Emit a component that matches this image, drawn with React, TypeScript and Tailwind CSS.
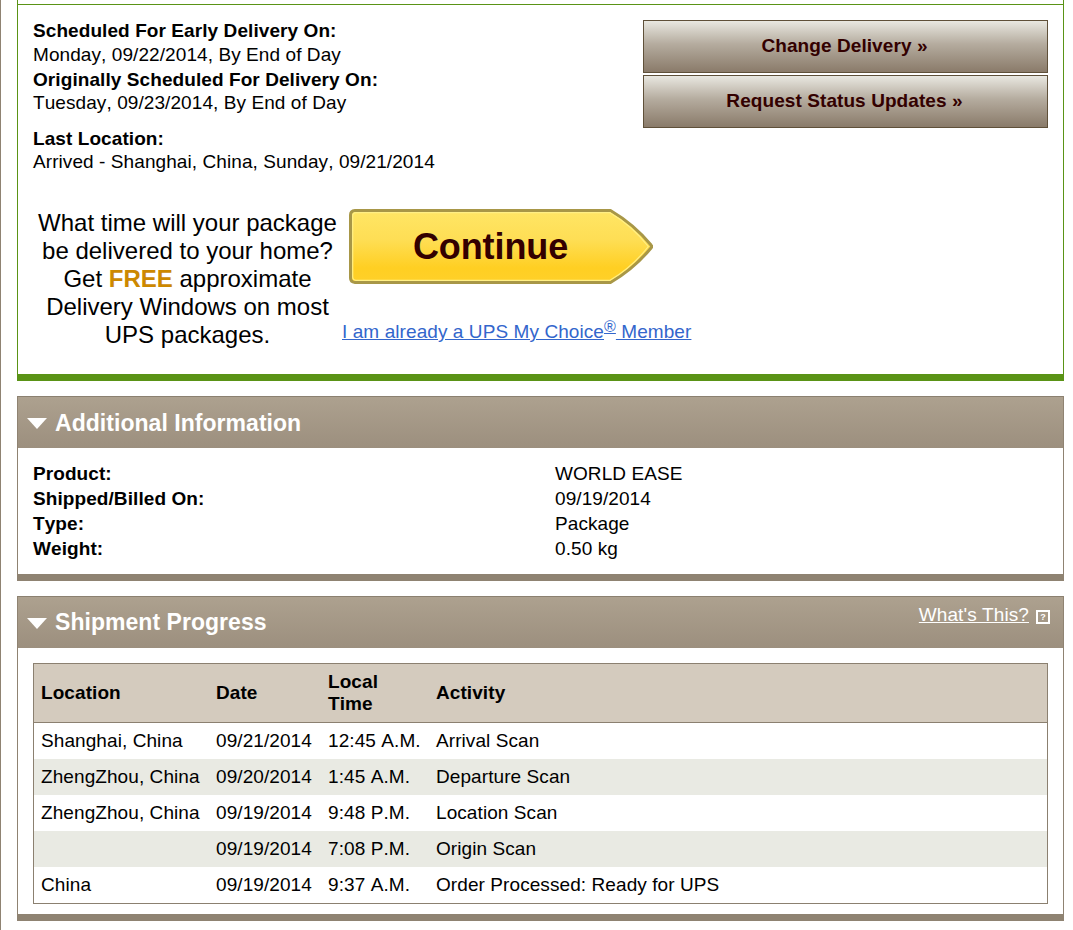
import type { ReactNode } from 'react';

const details = [
    { label: "Product:", value: "WORLD EASE" },
    { label: "Shipped/Billed On:", value: "09/19/2014" },
    { label: "Type:", value: "Package" },
    { label: "Weight:", value: "0.50 kg" },
]

const scans = [
    { location: "Shanghai, China", date: "09/21/2014", time: "12:45 A.M.", activity: "Arrival Scan" },
    { location: "ZhengZhou, China", date: "09/20/2014", time: "1:45 A.M.", activity: "Departure Scan" },
    { location: "ZhengZhou, China", date: "09/19/2014", time: "9:48 P.M.", activity: "Location Scan" },
    { location: "", date: "09/19/2014", time: "7:08 P.M.", activity: "Origin Scan" },
    { location: "China", date: "09/19/2014", time: "9:37 A.M.", activity: "Order Processed: Ready for UPS" },
]

const ActionButton = ({ children }: { children: ReactNode }) => (
    <button className="block h-[53px] w-full border border-[#5f5039] bg-linear-to-b from-[#e9e8e1] via-[#b5ac9f] via-45% to-[#8a7b6a] pr-[2px] pb-[2px] text-center font-bold tracking-[0.08px] text-[#330000]">
        {children}
    </button>
);

const SectionHeader = ({ title, children }: { title: ReactNode; children?: ReactNode }) => (
    <div className="flex h-[52px] justify-between border-t border-[#8b8070] bg-linear-to-b from-[#ada18f] to-[#9c8f7e] pr-[13px] pl-[9px] text-white">
        <div className="flex items-center">
            <svg className="mt-[2px]" width="20" height="11" viewBox="0 0 20 11">
                <path d="M0 0H20L10 11Z" fill="#fff" />
            </svg>
            <h2 className="ml-2 text-[23px] font-bold tracking-[0.04px]">{title}</h2>
        </div>
        {children}
    </div>
);

const ContinueButton = () => (
    <button className="relative block h-[75px] w-[304px]">
        <svg className="absolute inset-0" width="304" height="75" viewBox="0 0 304 75">
            <defs>
                <linearGradient id="gold" x1="0" y1="0" x2="0" y2="1">
                    <stop offset="0" stopColor="#ffe665" />
                    <stop offset="0.4" stopColor="#fede55" />
                    <stop offset="0.8" stopColor="#ffcf22" />
                    <stop offset="1" stopColor="#ffd02a" />
                </linearGradient>
            </defs>
            <path d="M6 1.500H261.500C275 9.500 291 22.500 302 36C303 37 303 38 302 39C291 52.500 275 65.500 261.500 73.500H6Q1.500 73 1.500 69V6Q1.500 2 6 1.500Z" fill="url(#gold)" stroke="#a89747" strokeWidth="3" strokeLinejoin="round" />
            <path d="M7 3.700H261C273.500 11 288 23 299.300 37.500C288 52 273.500 64 261 71.300H7Q3.700 71 3.700 68V7Q3.700 4 7 3.700Z" fill="none" stroke="#ffef85" strokeWidth="1.200" />
        </svg>
        <span className="relative block pr-[21px] text-center text-[36px] leading-[75px] font-bold tracking-[-0.1px] text-[#330000]">Continue</span>
    </button>
);

const TrackingPage = () => {
    return (
        <div className="min-h-screen border-l border-[#8f8372] bg-white pr-[9px] pl-4 font-['Liberation_Sans',Arial,sans-serif] text-[19px] leading-6 tracking-[0.08px] text-black [font-kerning:none]">
            <section className="h-[381px] border-x border-b-[7px] border-[#5a9316]">
                <div className="h-[5px] border-b border-[#5a9316]" />
                <div className="flex justify-between pt-[15px] pr-[15px] pl-[15px]">
                    <div className="-mt-px">
                        <p className="font-bold">Scheduled For Early Delivery On:</p>
                        <p>Monday, 09/22/2014, By End of Day</p>
                        <p className="pt-px font-bold">Originally Scheduled For Delivery On:</p>
                        <p className="-mt-px leading-[23px]">Tuesday, 09/23/2014, By End of Day</p>
                        <p className="mt-[13px] font-bold">Last Location:</p>
                        <p className="-mt-px leading-[23px]">Arrived - Shanghai, China, Sunday, 09/21/2014</p>
                    </div>
                    <div className="flex w-[405px] flex-col gap-[2px]">
                        <ActionButton>Change Delivery »</ActionButton>
                        <ActionButton>Request Status Updates »</ActionButton>
                    </div>
                </div>
                <div className="mt-[36px] flex pl-[15px]">
                    <p className="w-[309px] text-center text-[24px] leading-7 tracking-normal">
                        What time will your package<br />
                        be delivered to your home?<br />
                        Get <b className="text-[#cc8800]">FREE</b> approximate<br />
                        Delivery Windows on most<br />
                        UPS packages.
                    </p>
                    <div>
                        <div className="pl-[7px]">
                            <ContinueButton />
                        </div>
                        <a href="#" className="mt-9 block text-[#3366cc] underline">
                            I am already a UPS My Choice<sup className="-top-[6px] inline-block text-[16px] underline">®</sup> Member
                        </a>
                    </div>
                </div>
            </section>

            <section className="mt-[15px] h-[185px] border-x border-b-[7px] border-[#8f8372]">
                <SectionHeader title="Additional Information" />
                <dl className="px-[15px] pt-[13px] leading-[25px]">
                    {details.map((item) => (
                        <div key={item.label} className="flex">
                            <dt className="w-[522px] font-bold">{item.label}</dt>
                            <dd>{item.value}</dd>
                        </div>
                    ))}
                </dl>
            </section>

            <section className="mt-[15px] h-[325px] border-x border-b-[7px] border-[#8f8372]">
                <SectionHeader title={<span className="block pb-[2px]">Shipment Progress</span>}>
                    <div className="flex items-start pt-[6px]">
                        <a href="#" className="underline">What's This?</a>
                        <span className="mt-[7px] ml-[7px] flex size-[14px] items-center justify-center border-2 border-white text-[9px] leading-none font-bold tracking-normal">?</span>
                    </div>
                </SectionHeader>
                <div className="px-[15px] pt-[15px]">
                    <div className="border border-[#8b8070]">
                        <table className="w-full table-fixed border-collapse text-left">
                            <colgroup>
                                <col className="w-[175px]" />
                                <col className="w-[112px]" />
                                <col className="w-[108px]" />
                                <col />
                            </colgroup>
                            <thead>
                                <tr className="h-[59px] bg-[#d4cbbe] leading-[22px] shadow-[inset_0_-1px_0_#8b8070]">
                                    <th className="pb-px pl-[7px]">Location</th>
                                    <th className="pb-px pl-[7px]">Date</th>
                                    <th className="pb-px pl-[7px]">Local<br />Time</th>
                                    <th className="pb-px pl-[7px]">Activity</th>
                                </tr>
                            </thead>
                            <tbody>
                                {scans.map((scan, index) => (
                                    <tr key={index} className="h-9 whitespace-nowrap even:bg-[#e9eae3]">
                                        <td className="pl-[7px]">{scan.location}</td>
                                        <td className="pl-[7px]">{scan.date}</td>
                                        <td className="pl-[7px]">{scan.time}</td>
                                        <td className="pl-[7px]">{scan.activity}</td>
                                    </tr>
                                ))}
                            </tbody>
                        </table>
                    </div>
                </div>
            </section>
        </div>
    );
}

export default TrackingPage;
